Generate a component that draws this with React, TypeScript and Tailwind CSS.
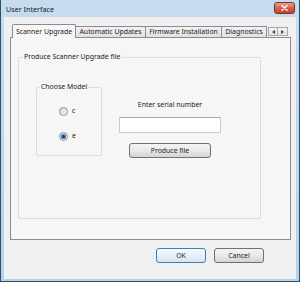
function Radio({ checked }: { checked?: boolean }) {
  return (
    <svg width="9" height="9" viewBox="0 0 9 9">
      <defs>
        <linearGradient id={checked ? "rbOn" : "rbOff"} x1="0" y1="0" x2="1" y2="1">
          <stop offset="0" stopColor="#d4d4d4" />
          <stop offset="1" stopColor="#f6f6f6" />
        </linearGradient>
      </defs>
      <circle cx="4.5" cy="4.5" r="4" fill={`url(#${checked ? "rbOn" : "rbOff"})`} stroke="#8d9297" strokeWidth="1" />
      {checked && (
        <>
          <circle cx="4.5" cy="4.5" r="2.6" fill="#4f86b8" />
          <circle cx="4.5" cy="4.5" r="1.5" fill="#1b3f66" />
        </>
      )}
    </svg>
  );
}

function WinButton({ label, primary, className = "" }: { label: string; primary?: boolean; className?: string }) {
  return (
    <div
      className={`flex items-center justify-center rounded-[3px] border text-[#222] ${
        primary
          ? "border-[#3c7fb1] bg-gradient-to-b from-[#f6fafd] via-[#e8f0f8] to-[#d6e4f1]"
          : "border-[#707070] bg-gradient-to-b from-[#f4f4f4] via-[#e9e9e9] to-[#d4d4d4]"
      } ${className}`}
    >
      {label}
    </div>
  );
}

function Tab({ label, active, width }: { label: string; active?: boolean; width: string }) {
  return (
    <div
      className={`flex items-center justify-center border border-b-0 border-[#898c95] whitespace-nowrap ${
        active
          ? "relative z-10 -mb-px h-[14px] bg-[#f7f7f7] rounded-t-[2px]"
          : "h-[11px] bg-gradient-to-b from-[#f3f3f3] to-[#e1e1e1] border-l-0"
      } ${width}`}
    >
      {label}
    </div>
  );
}

export default function App() {
  return (
    <div className="w-[300px] h-[282px] flex flex-col border-x border-b border-[#2f5168] bg-gradient-to-b from-[#c7dbf0] to-[#b9d0ea] font-['Noto_Sans','Open_Sans',sans-serif] text-[6.9px] leading-[10px] text-[#222]">
      {/* title bar */}
      <div className="h-[17px] flex items-start justify-between pl-[5px] pr-[4px]">
        <span className="mt-[4px] text-[7.2px] text-[#1a1a1a]">User Interface</span>
        <div className="mt-[2px] w-[21px] h-[12px] rounded-[3px] border border-[#7a3326] bg-gradient-to-b from-[#e9a594] via-[#d2614b] to-[#c4432a] flex items-center justify-center">
          <svg width="7" height="6" viewBox="0 0 7 6">
            <path d="M1 0.8 L6 5.2 M6 0.8 L1 5.2" stroke="#fff" strokeWidth="1.4" strokeLinecap="round" />
          </svg>
        </div>
      </div>

      {/* client area */}
      <div className="mx-[3px] mb-[2px] flex-1 flex flex-col bg-[#f0f0f0]">
        {/* tabs */}
        <div className="flex items-end pl-[8px] pr-[8px] pt-[7px]">
          <Tab label="Scanner Upgrade" active width="w-[64px]" />
          <Tab label="Automatic Updates" width="w-[70px]" />
          <Tab label="Firmware Installation" width="w-[76px]" />
          <Tab label="Diagnostics" width="w-[45px]" />
          <div className="ml-auto mb-[1px] flex">
            <div className="w-[10px] h-[9px] border border-[#a9a9a9] bg-gradient-to-b from-[#f6f6f6] to-[#e2e2e2] flex items-center justify-center">
              <svg width="3" height="4" viewBox="0 0 3 4"><path d="M3 0 L0 2 L3 4 Z" fill="#444" /></svg>
            </div>
            <div className="w-[10px] h-[9px] border border-l-0 border-[#a9a9a9] bg-gradient-to-b from-[#f6f6f6] to-[#e2e2e2] flex items-center justify-center">
              <svg width="3" height="4" viewBox="0 0 3 4"><path d="M0 0 L3 2 L0 4 Z" fill="#444" /></svg>
            </div>
          </div>
        </div>

        {/* tab panel */}
        <div className="ml-[6px] w-[281px] h-[203px] border border-[#898c95] bg-[#f6f6f6]">
          <fieldset className="ml-[7px] mt-[14px] w-[243px] h-[167px] border border-[#d5dfe5] rounded-[2px]">
            <legend className="ml-[4px] px-[1px] leading-[10px]">Produce Scanner Upgrade file</legend>
            <div className="flex items-start pl-[17px]">
              <fieldset className="mt-[20px] w-[66px] h-[74px] border border-[#d5dfe5] rounded-[2px]">
                <legend className="ml-[3px] px-[1px] leading-[10px]">Choose Model</legend>
                <div className="flex flex-col pl-[22px]">
                  <div className="mt-[14px] h-[10px] flex items-center gap-[4px]">
                    <Radio />
                    <span>c</span>
                  </div>
                  <div className="mt-[15px] h-[10px] flex items-center gap-[4px]">
                    <Radio checked />
                    <span>e</span>
                  </div>
                </div>
              </fieldset>
              <div className="ml-[17px] mt-[38px] w-[102px] flex flex-col items-center">
                <span className="h-[10px]">Enter serial number</span>
                <div className="mt-[7px] w-full h-[16px] border border-[#c5cbd3] border-t-[#abadb3] bg-white" />
                <WinButton label="Produce file" className="mt-[10px] w-[82px] h-[15px]" />
              </div>
            </div>
          </fieldset>
        </div>

        {/* dialog buttons */}
        <div className="mt-[8px] flex justify-end gap-[8px] pr-[32px]">
          <WinButton label="OK" primary className="w-[50px] h-[15px]" />
          <WinButton label="Cancel" className="w-[50px] h-[15px]" />
        </div>
      </div>
    </div>
  );
}
